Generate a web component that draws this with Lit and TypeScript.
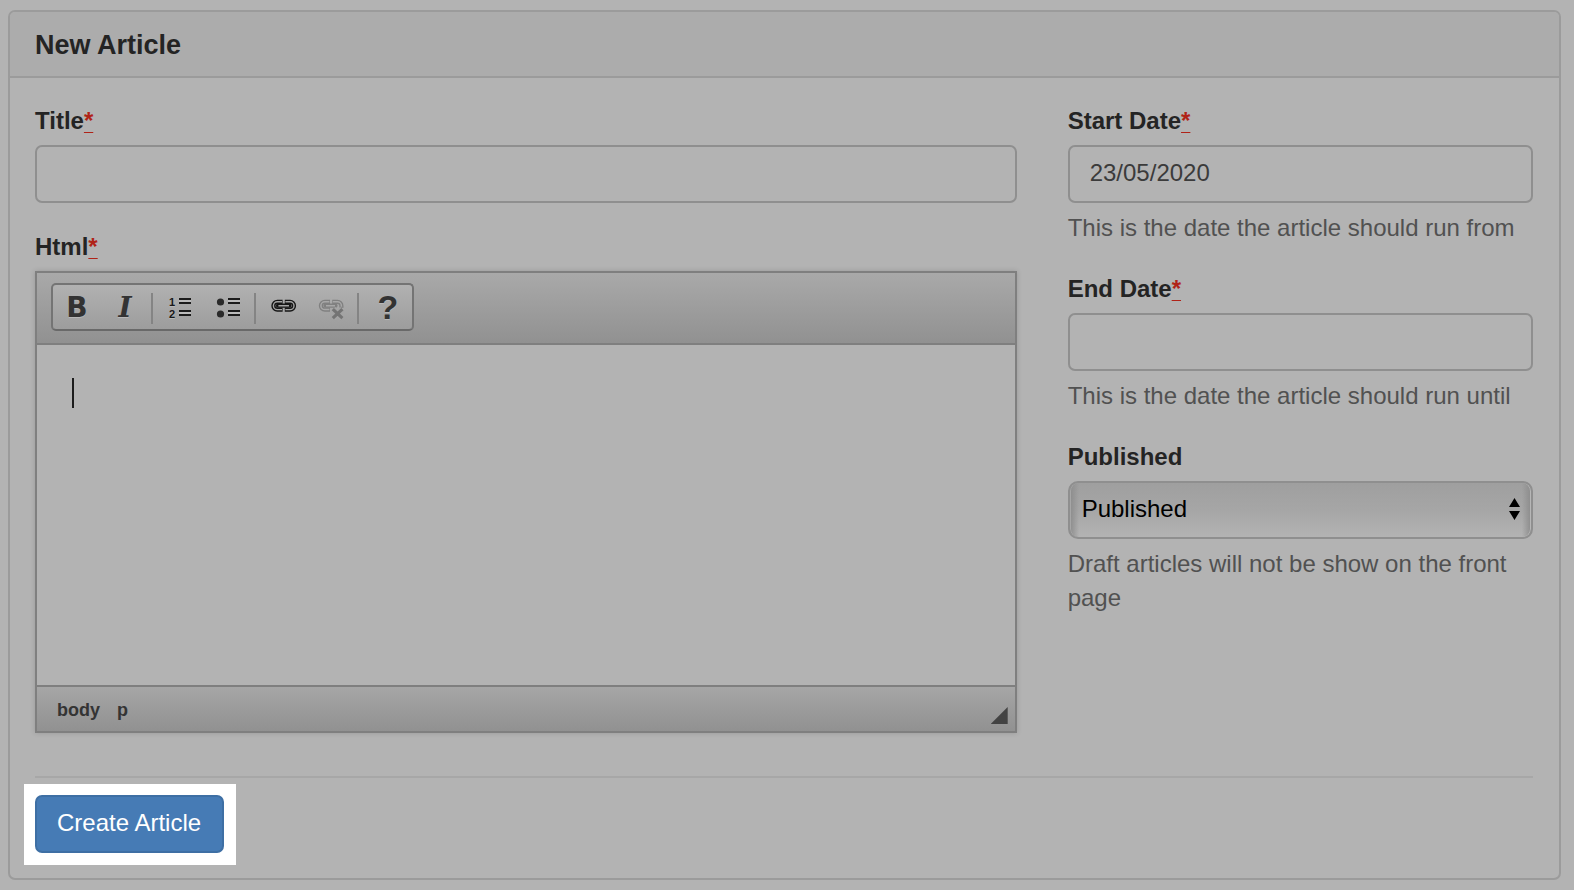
import { LitElement, html, css, svg } from "lit";
import { customElement } from "lit/decorators.js";

const listLines = (x: number) => svg`
  <path d="M${x} 9H${x + 12}M${x} 21H${x + 12}" stroke="#bcbcbc" stroke-width="2"/>
  <path d="M${x} 7H${x + 12}M${x} 11H${x + 12}M${x} 19H${x + 12}M${x} 23H${x + 12}" stroke="#1c1c1c" stroke-width="2"/>`;

const orderedIcon = html`<svg class="icon" viewBox="0 0 32 32" aria-hidden="true">
  <text class="digit" x="5" y="14">1</text>
  <text class="digit" x="5" y="26">2</text>
  ${listLines(15)}
</svg>`;

const bulletIcon = html`<svg class="icon" viewBox="0 0 32 32" aria-hidden="true">
  <circle cx="8.5" cy="10" r="3.6" fill="#2a2a2a"/>
  <circle cx="8.5" cy="22" r="3.6" fill="#2a2a2a"/>
  ${listLines(16)}
</svg>`;

const linkIcon = html`<svg class="icon" viewBox="0 0 32 32" fill="none" aria-hidden="true">
  <path d="M15.6 9.8H10.3a3.9 3.9 0 0 0 0 7.8h5.3M17.8 9.8h5.3a3.9 3.9 0 0 1 0 7.8h-5.3" stroke="#161616" stroke-width="4.2"/>
  <path d="M11 13.7H22.4" stroke="#161616" stroke-width="4.2" stroke-linecap="round"/>
  <path d="M15 9.8H10.3a3.9 3.9 0 0 0 0 7.8H15M18.4 9.8h4.7a3.9 3.9 0 0 1 0 7.8h-4.7M11.4 13.7H22" stroke="#a4a4a4" stroke-width="1.4"/>
</svg>`;

const unlinkIcon = html`<svg class="icon" viewBox="0 0 32 32" fill="none" aria-hidden="true">
  <path d="M15 9.8H9.8a3.9 3.9 0 0 0 0 7.8H15M17.2 9.8h5.3a3.9 3.9 0 0 1 3.9 3.9v2" stroke="#808080" stroke-width="4.2"/>
  <path d="M10.5 13.7H20.5" stroke="#808080" stroke-width="4.2" stroke-linecap="round"/>
  <path d="M14.4 9.8H9.8a3.9 3.9 0 0 0 0 7.8h4.6M17.8 9.8h4.7a3.9 3.9 0 0 1 3.9 3.9v1M11 13.7H20" stroke="#a8a8a8" stroke-width="1.5"/>
  <path d="M18.2 17.2l9 9M27.2 17.2l-9 9" stroke="#a4a4a4" stroke-width="6"/>
  <path d="M17.8 17.2l9.6 9M27.4 17.2l-9.6 9" stroke="#747474" stroke-width="3.2"/>
</svg>`;

const required = html`<abbr class="required" title="required">*</abbr>`;

@customElement("article-editor")
export class ArticleEditor extends LitElement {
  static styles = css`
    :host {
      display: block;
    }
    .frame {
      border: 2px solid #7f7f7f;
      box-shadow: 0 0 5px rgba(0, 0, 0, 0.16);
    }
    .top {
      padding: 10px 14px 12px;
      border-bottom: 2px solid #7f7f7f;
      background: linear-gradient(#a9a9a9, #919191);
    }
    .group {
      display: inline-flex;
      align-items: center;
      vertical-align: top;
      border: 2px solid #747474;
      border-bottom-color: #696969;
      border-radius: 5px;
      background: linear-gradient(#b1b1b1, #9d9d9d);
    }
    .tool {
      display: flex;
      align-items: center;
      justify-content: center;
      width: 48px;
      height: 44px;
      padding: 2px 0 0;
      border: 0;
      background: none;
      color: #333;
      font: bold 28px/32px "DejaVu Sans", sans-serif;
      text-shadow: 0 1px 0 #b8b8b8;
    }
    .italic {
      font-family: "DejaVu Serif", serif;
      font-style: italic;
    }
    .help {
      width: 50px;
      padding: 0 0 0 2px;
      font-family: "Liberation Sans", Arial, sans-serif;
      font-size: 34px;
    }
    .icon {
      width: 32px;
      height: 32px;
    }
    .digit {
      font: bold 11px "Liberation Sans", Arial, sans-serif;
      fill: #181818;
    }
    .separator {
      width: 2px;
      height: 31px;
      margin: 2px 3px 0 2px;
      background: #848484;
    }
    .content {
      min-height: 340px;
      padding: 33px 35px;
      box-sizing: border-box;
      background: #b3b3b3;
      outline: 0;
    }
    .caret {
      width: 2px;
      height: 30px;
      background: #1c1c1c;
    }
    .bottom {
      display: flex;
      justify-content: space-between;
      align-items: flex-end;
      height: 44px;
      padding: 0 7px 0 20px;
      box-sizing: border-box;
      background: linear-gradient(#a6a6a6, #919191);
    }
    .divider {
      height: 2px;
      background: #7f7f7f;
    }
    .path {
      display: flex;
      gap: 17px;
      align-self: center;
      padding-top: 2px;
    }
    .crumb {
      color: #343434;
      font: bold 18px/24px "Liberation Sans", Arial, sans-serif;
      text-decoration: none;
    }
    .resizer {
      width: 17px;
      height: 17px;
      margin-bottom: 7px;
      background: #434343;
      clip-path: polygon(100% 0, 100% 100%, 0 100%);
    }
  `;

  render() {
    return html`
      <div class="frame">
        <div class="top">
          <div class="group" role="toolbar" aria-label="Editor toolbar">
            <button class="tool" type="button" aria-label="Bold">B</button>
            <button class="tool italic" type="button" aria-label="Italic">I</button>
            <span class="separator"></span>
            <button class="tool" type="button" aria-label="Numbered list">${orderedIcon}</button>
            <button class="tool" type="button" aria-label="Bulleted list">${bulletIcon}</button>
            <span class="separator"></span>
            <button class="tool" type="button" aria-label="Link">${linkIcon}</button>
            <button class="tool" type="button" aria-label="Unlink">${unlinkIcon}</button>
            <span class="separator"></span>
            <button class="tool help" type="button" aria-label="Help">?</button>
          </div>
        </div>
        <div class="content" role="textbox" aria-multiline="true" aria-label="Html" contenteditable="true">
          <div class="caret"></div>
        </div>
        <div class="divider"></div>
        <div class="bottom">
          <nav class="path" aria-label="Elements path">
            <a class="crumb" href="#body">body</a>
            <a class="crumb" href="#p">p</a>
          </nav>
          <span class="resizer"></span>
        </div>
      </div>
    `;
  }
}

@customElement("app-root")
export class AppRoot extends LitElement {
  static styles = css`
    :host {
      display: block;
      min-height: 100vh;
      box-sizing: border-box;
      padding: 10px 13px 10px 8px;
      background: #b3b3b3;
      color: #242424;
      font: 24px/34px "Liberation Sans", Arial, sans-serif;
    }
    .panel {
      border: 2px solid #9b9b9b;
      border-radius: 7px;
    }
    .heading {
      padding: 17px 25px 15px;
      border-bottom: 2px solid #9b9b9b;
      border-radius: 5px 5px 0 0;
      background: #acacac;
    }
    .title {
      margin: 0;
      font-size: 27px;
      line-height: 32px;
      font-weight: 700;
    }
    .form {
      padding: 26px 26px 13px 25px;
    }
    .row {
      display: flex;
      margin: 0 -26px 0 -25px;
    }
    .main,
    .side {
      box-sizing: border-box;
      padding: 0 26px 0 25px;
    }
    .main {
      width: 66.6667%;
    }
    .side {
      width: 33.3333%;
    }
    .field {
      margin-bottom: 27px;
    }
    .label {
      display: block;
      margin-bottom: 7px;
      font-weight: 700;
    }
    .required {
      color: #b02318;
      text-decoration: underline 1px;
      text-underline-offset: 3px;
    }
    .input,
    .select {
      display: block;
      width: 100%;
      height: 58px;
      box-sizing: border-box;
      border: 2px solid #8f8f8f;
      font: inherit;
    }
    .input {
      padding: 0 20px 2px;
      border-radius: 7px;
      background: #b3b3b3;
      color: #3b3b3b;
      outline: 0;
    }
    .select-wrap {
      position: relative;
    }
    .select {
      appearance: none;
      padding: 0 40px 2px 12px;
      border-radius: 10px;
      background: linear-gradient(to right, #8c8c8c, transparent 9px calc(100% - 9px), #8c8c8c),
        linear-gradient(#9f9f9f, #a6a6a6 50%, #b3b3b3);
      box-shadow: inset 1px 0 0 #a6a6a6, inset -1px 0 0 #b6b6b6;
      color: #000;
    }
    .arrows {
      position: absolute;
      top: 17px;
      right: 13px;
      width: 11px;
      height: 22px;
      pointer-events: none;
    }
    .hint {
      margin: 8px 0 0;
      color: #515151;
    }
    .rule {
      height: 2px;
      margin: 16px 0 6px;
      border: 0;
      background: #a7a7a7;
    }
    .highlight {
      display: inline-block;
      vertical-align: top;
      margin-left: -11px;
      padding: 11px 12px 12px 11px;
      background: #fff;
    }
    .submit {
      display: block;
      height: 58px;
      padding: 0 21px 2px 20px;
      border: 2px solid #3e6fa4;
      border-radius: 7px;
      background: #467bb5;
      color: #fff;
      font: inherit;
    }
  `;

  render() {
    return html`
      <section class="panel">
        <header class="heading"><h1 class="title">New Article</h1></header>
        <form class="form" @submit=${(e: Event) => e.preventDefault()}>
          <div class="row">
            <div class="main">
              <div class="field">
                <label class="label" for="title">Title${required}</label>
                <input class="input" id="title" type="text" />
              </div>
              <div class="field">
                <label class="label" for="editor">Html${required}</label>
                <article-editor id="editor"></article-editor>
              </div>
            </div>
            <div class="side">
              <div class="field">
                <label class="label" for="start">Start Date${required}</label>
                <input class="input" id="start" type="text" value="23/05/2020" />
                <p class="hint">This is the date the article should run from</p>
              </div>
              <div class="field">
                <label class="label" for="end">End Date${required}</label>
                <input class="input" id="end" type="text" />
                <p class="hint">This is the date the article should run until</p>
              </div>
              <div class="field">
                <label class="label" for="published">Published</label>
                <div class="select-wrap">
                  <select class="select" id="published">
                    <option>Published</option>
                    <option>Draft</option>
                  </select>
                  <svg class="arrows" viewBox="0 0 11 22" aria-hidden="true">
                    <path d="M5.5 0L11 9H0zM0 13h11l-5.5 9z" />
                  </svg>
                </div>
                <p class="hint">Draft articles will not be show on the front page</p>
              </div>
            </div>
          </div>
          <hr class="rule" />
          <div class="highlight">
            <button class="submit" type="submit">Create Article</button>
          </div>
        </form>
      </section>
    `;
  }
}
